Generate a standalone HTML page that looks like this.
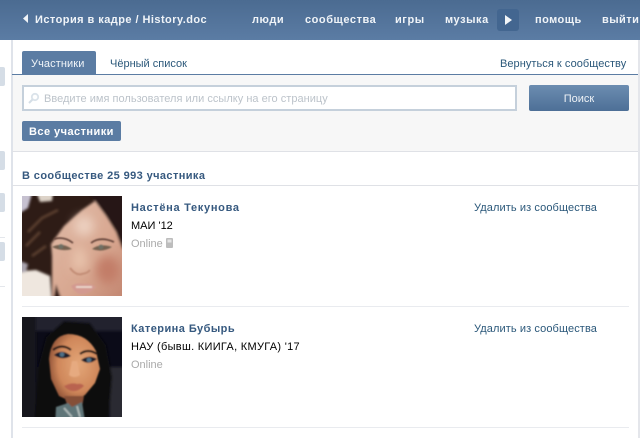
<!DOCTYPE html>
<html lang="ru">
<head>
<meta charset="utf-8">
<title>Участники</title>
<style>
html,body{margin:0;padding:0;background:#fff}
body{width:640px;height:438px;position:relative;overflow:hidden;font-family:"Liberation Sans",sans-serif;font-size:11px;color:#000}
.a{position:absolute;white-space:nowrap}
.box{position:absolute}
.hd{font-weight:bold;color:#f0f4f8;font-size:11px;top:13px;line-height:15px;letter-spacing:.55px}
.lnk{color:#2b587a;line-height:14px}
.name{color:#36597f;font-weight:bold;line-height:14px}
</style>
</head>
<body>
<div class="box" style="left:0;top:0;width:640px;height:40px;background:linear-gradient(#4b6b91,#5b7ca4)"></div>
<svg class="box" style="left:23px;top:14px" width="6" height="10"><path d="M5 0V9L0 4.5Z" fill="#f0f4f8"/></svg>
<div class="a hd" style="left:35px;letter-spacing:.45px">История в кадре / History.doc</div>
<div class="a hd" style="left:252px">люди</div>
<div class="a hd" style="left:305px">сообщества</div>
<div class="a hd" style="left:395px">игры</div>
<div class="a hd" style="left:445px">музыка</div>
<div class="box" style="left:497px;top:9px;width:22px;height:22px;background:#436690;border-radius:3px"></div>
<svg class="box" style="left:505px;top:15px" width="8" height="10"><path d="M0 0L7 5L0 10Z" fill="#f2f5f8"/></svg>
<div class="a hd" style="left:535px;letter-spacing:.45px">помощь</div>
<div class="a hd" style="left:602px;letter-spacing:.45px">выйти</div>

<div class="box" style="left:11px;top:40px;width:2px;height:398px;background:#dfe3ea"></div>
<div class="box" style="left:638px;top:40px;width:2px;height:398px;background:#e4e6eb"></div>
<div class="box" style="left:0;top:67px;width:5px;height:19px;background:#d5dde6;border-radius:0 2px 2px 0"></div>
<div class="box" style="left:0;top:151px;width:5px;height:19px;background:#d5dde6;border-radius:0 2px 2px 0"></div>
<div class="box" style="left:0;top:193px;width:5px;height:19px;background:#d5dde6;border-radius:0 2px 2px 0"></div>
<div class="box" style="left:0;top:237px;width:5px;height:1px;background:#e4e7ec"></div>
<div class="box" style="left:0;top:242px;width:5px;height:19px;background:#d5dde6;border-radius:0 2px 2px 0"></div>
<div class="box" style="left:0;top:286px;width:5px;height:1px;background:#e4e7ec"></div>

<div class="box" style="left:22px;top:51px;width:74px;height:23px;background:#5b7ca3;border-radius:2px 2px 0 0"></div>
<div class="a" style="left:31px;top:57px;color:#f0f4f8;line-height:14px;letter-spacing:.1px">Участники</div>
<div class="a lnk" style="left:110px;top:57px">Чёрный список</div>
<div class="a lnk" style="left:500px;top:57px;letter-spacing:.05px">Вернуться к сообществу</div>
<div class="box" style="left:12px;top:74px;width:626px;height:1px;background:#5b7ca3"></div>

<div class="box" style="left:13px;top:75px;width:625px;height:76px;background:#f7f7f7"></div>
<div class="box" style="left:22px;top:85px;width:491px;height:22px;background:#fff;border:2px solid #c5d0db"></div>
<svg class="box" style="left:27px;top:92px" width="13" height="13"><circle cx="8" cy="5" r="3.2" fill="none" stroke="#dbe3ea" stroke-width="1.8"/><path d="M5.5 7.5L2 11" stroke="#d5dee6" stroke-width="2"/></svg>
<div class="a" style="left:44px;top:92px;color:#bcc3ca;line-height:14px;letter-spacing:.02px">Введите имя пользователя или ссылку на его страницу</div>
<div class="box" style="left:529px;top:85px;width:100px;height:26px;background:linear-gradient(#6c8db1,#4d6f97);border-radius:2px"></div>
<div class="a" style="left:529px;top:92px;width:100px;text-align:center;color:#eef2f6;line-height:14px">Поиск</div>
<div class="box" style="left:22px;top:121px;width:99px;height:20px;background:#5b7ca3;border-radius:2px"></div>
<div class="a" style="left:29px;top:125px;color:#fff;font-weight:bold;line-height:14px;letter-spacing:.45px">Все участники</div>
<div class="box" style="left:12px;top:151px;width:626px;height:1px;background:#dfe1e6"></div>

<div class="a" style="left:22px;top:169px;color:#36597f;font-weight:bold;line-height:14px;letter-spacing:.4px">В сообществе 25 993 участника</div>
<div class="box" style="left:12px;top:185px;width:626px;height:1px;background:#dfe1e6"></div>

<svg class="box" style="left:22px;top:196px" width="100" height="100" viewBox="0 0 100 100">
<defs>
<clipPath id="c1"><rect width="100" height="100"/></clipPath>
<filter id="b0" filterUnits="userSpaceOnUse" x="-30" y="-30" width="160" height="160"><feGaussianBlur stdDeviation="1.2"/></filter>
<filter id="b1" filterUnits="userSpaceOnUse" x="-30" y="-30" width="160" height="160"><feGaussianBlur stdDeviation=".8"/></filter>
<filter id="b2" filterUnits="userSpaceOnUse" x="-30" y="-30" width="160" height="160"><feGaussianBlur stdDeviation="5"/></filter>
<linearGradient id="f1" x1="0" y1="0" x2="1" y2="1"><stop offset="0" stop-color="#e0bba8"/><stop offset=".55" stop-color="#d8a790"/><stop offset="1" stop-color="#bd7e69"/></linearGradient>
</defs>
<g clip-path="url(#c1)">
<rect width="100" height="100" fill="#2e1c16"/>
<g filter="url(#b0)">
<path d="M-10 -10H12L6 12L-10 22Z" fill="#c6c1d0"/>
<path d="M12 -10H32L30 5L18 6Z" fill="#ddd3c8"/>
<path d="M-10 76L14 74L28 80L30 110H-10Z" fill="#efe7df"/>
<path d="M-10 62L6 68L4 76L-10 78Z" fill="#aaa4ae"/>
<path d="M30 110L30 60L29 48L42 30L60 14L73 5L83 18L93 32L100 52L110 58V110Z" fill="url(#f1)"/>
<path d="M73 5L84 20L94 36L100 52L110 60V-10H60Z" fill="#281813"/>
<path d="M6 36L20 22L36 14M4 50L18 36M10 60L24 50" stroke="#5e4232" stroke-width="2.5" fill="none"/>
<path d="M30 110L34 88L42 110Z" fill="#3b241c"/>
</g>
<g filter="url(#b2)">
<ellipse cx="86" cy="74" rx="12" ry="14" fill="#c27d68"/>
<ellipse cx="62" cy="30" rx="10" ry="10" fill="#ecd0c0"/>
<path d="M52 52H62L66 72L50 74Z" fill="#e8c3ac"/>
</g>
<g filter="url(#b1)">
<path d="M32 43Q42 40 51 47" stroke="#5a3a31" stroke-width="1.6" fill="none"/>
<path d="M69 47Q78 40 92 46" stroke="#5a3a31" stroke-width="1.6" fill="none"/>
<path d="M30 51Q40 46 50 53Q40 56 30 51Z" fill="#75604f"/>
<path d="M70 53Q78 47 90 51Q80 57 70 53Z" fill="#75604f"/>
<circle cx="39" cy="50.5" r="2.4" fill="#6e7065"/>
<circle cx="79" cy="51" r="2.4" fill="#6e7065"/>
<path d="M48 72Q54 80 60 78Q66 77 68 74" stroke="#c28d76" stroke-width="2" fill="none"/>
<path d="M49 90Q55 86 62 88Q68 87 74 91Q66 99 58 98Q52 96 49 90Z" fill="#d39a90"/>
<path d="M54 91H70" stroke="#f0dfd7" stroke-width="1.6"/>
</g>
</g>
</svg>

<div class="a name" style="left:131px;top:201px;letter-spacing:.7px">Настёна Текунова</div>
<div class="a" style="left:131px;top:219px;line-height:14px">МАИ '12</div>
<div class="a" style="left:131px;top:237px;color:#aaa;line-height:14px">Online</div>
<svg class="box" style="left:165px;top:238px" width="9" height="11"><rect x="1" y="0" width="7" height="10" rx="1" fill="#bdbdbd"/><rect x="2.5" y="1.5" width="4" height="3" fill="#e5e5e5"/></svg>
<div class="a lnk" style="left:474px;top:201px;letter-spacing:.1px">Удалить из сообщества</div>
<div class="box" style="left:22px;top:306px;width:607px;height:1px;background:#e9ebef"></div>

<svg class="box" style="left:22px;top:317px" width="100" height="100" viewBox="0 0 100 100">
<defs>
<clipPath id="c2"><rect width="100" height="100"/></clipPath>
<radialGradient id="f2" cx=".58" cy=".45" r=".62"><stop offset="0" stop-color="#e3a678"/><stop offset=".65" stop-color="#cf875a"/><stop offset="1" stop-color="#8a4e34"/></radialGradient>
</defs>
<g clip-path="url(#c2)">
<rect width="100" height="100" fill="#0b0b18"/>
<g filter="url(#b0)">
<rect x="-10" y="-10" width="120" height="24" fill="#22242f"/>
<rect x="-10" y="-10" width="24" height="120" fill="#12131d"/>
<rect x="88" y="50" width="22" height="60" fill="#2a2a30"/>
<path d="M12 110L16 50L24 20L42 4L68 6L84 28L90 60L86 110Z" fill="#07070f"/>
</g>
<g filter="url(#b1)">
<path d="M27 42Q29 19 46 17Q65 17 74 34L78 52L73 66L63 78L50 85L37 79L29 62Z" fill="url(#f2)"/>
<path d="M42 79H62L60 90H46Z" fill="#854f37"/>
<path d="M33 110L34 90L46 86L50 90L60 85L64 110Z" fill="#5f7478"/>
<path d="M42 91L50 100M55 89L58 100" stroke="#aeb9b8" stroke-width="2"/>
<path d="M31 33Q40 26 49 33" stroke="#1f1214" stroke-width="2.2" fill="none"/>
<path d="M58 37Q66 31 75 37" stroke="#1f1214" stroke-width="2.2" fill="none"/>
<path d="M32 38Q40 31 49 39Q40 44 32 38Z" fill="#1c1f2b"/>
<path d="M59 43Q67 37 75 42Q67 49 59 43Z" fill="#1c1f2b"/>
<circle cx="40" cy="37.5" r="2.4" fill="#4f6f86"/>
<circle cx="67" cy="43" r="2.4" fill="#4f6f86"/>
<path d="M50 44L47 58Q52 62 58 58L55 44Z" fill="#e6aa80"/>
<path d="M42 69Q50 65 55 67Q60 66 62 69Q56 75 50 74Q45 73 42 69Z" fill="#b9644f"/>
</g>
</g>
</svg>

<div class="a name" style="left:131px;top:322px;letter-spacing:.45px">Катерина Бубырь</div>
<div class="a" style="left:131px;top:340px;line-height:14px;letter-spacing:.3px">НАУ (бывш. КИИГА, КМУГА) '17</div>
<div class="a" style="left:131px;top:358px;color:#aaa;line-height:14px">Online</div>
<div class="a lnk" style="left:474px;top:322px;letter-spacing:.1px">Удалить из сообщества</div>
<div class="box" style="left:22px;top:427px;width:607px;height:1px;background:#e9ebef"></div>
</body>
</html>
